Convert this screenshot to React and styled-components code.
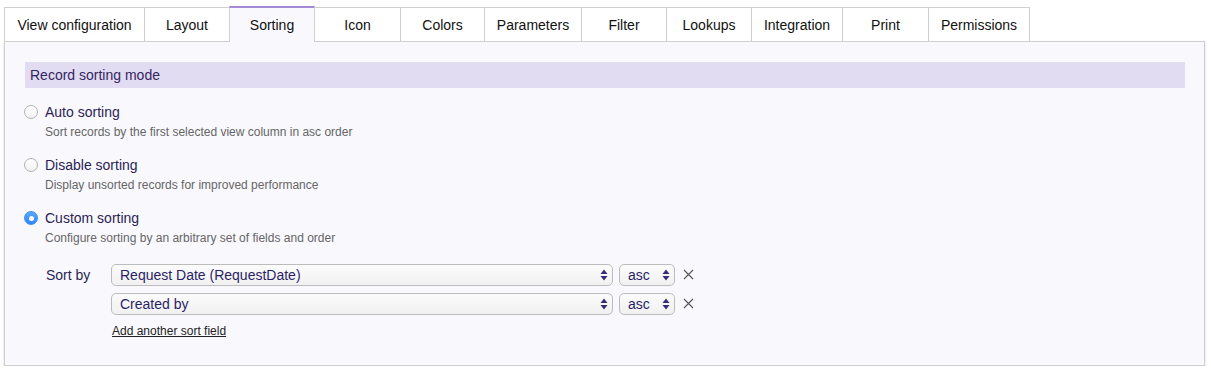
import React from "react";
import styled, { createGlobalStyle } from "styled-components";

const Global = createGlobalStyle`
  html, body { margin: 0; padding: 0; background: #ffffff; }
  body { font-family: "Liberation Sans", Arial, Helvetica, sans-serif; }
  * { box-sizing: border-box; }
`;

const Page = styled.div`
  padding: 7px 6px 0 4px;
  width: 1211px;
`;

const TabBar = styled.div`
  display: flex;
  align-items: flex-end;
  height: 35px;
  position: relative;
  z-index: 1;
`;

const Tab = styled.div`
  width: ${(p) => p.$w}px;
  height: ${(p) => (p.$active ? 36 : 35)}px;
  margin-left: -1px;
  &:first-child { margin-left: 0; }
  padding: 0 10px ${(p) => (p.$active ? 1 : 0)}px;
  display: flex;
  align-items: center;
  justify-content: center;
  font-size: 14px;
  color: #111;
  white-space: nowrap;
  background: ${(p) => (p.$active ? "#f9f8fd" : "#ffffff")};
  border: 1px solid #cfcfcf;
  border-top: ${(p) => (p.$active ? "2px solid #a58bd3" : "1px solid #cfcfcf")};
  border-bottom: ${(p) => (p.$active ? "none" : "1px solid #cfcfcf")};
`;

const Panel = styled.div`
  margin-top: -1px;
  background: #f9f8fd;
  border: 1px solid #cfcfcf;
  box-shadow: 0 1px 2px rgba(0, 0, 0, 0.18);
  padding: 20px 19px 0 20px;
  height: 325px;
`;

const SectionHeader = styled.div`
  height: 26px;
  background: #e2dcf2;
  color: #34265f;
  font-size: 14px;
  display: flex;
  align-items: center;
  padding-left: 5px;
`;

const Options = styled.div`
  display: flex;
  flex-direction: column;
  gap: 14px;
  margin-top: 14px;
`;

const Option = styled.div`
  display: grid;
  grid-template-columns: 20px 1fr;
  align-items: center;
`;

const Radio = styled.span`
  width: 14px;
  height: 14px;
  border-radius: 50%;
  margin-left: -1px;
  display: flex;
  align-items: center;
  justify-content: center;
  border: 1px solid ${(p) => (p.$checked ? "#3b8ff6" : "#b3b3b3")};
  background: ${(p) =>
    p.$checked
      ? "linear-gradient(#5aa8fb, #2f86f5)"
      : "linear-gradient(#ffffff, #f1f1f1)"};
  &::after {
    content: "";
    width: 5px;
    height: 5px;
    border-radius: 50%;
    background: #fff;
    display: ${(p) => (p.$checked ? "block" : "none")};
  }
`;

const OptionLabel = styled.div`
  font-size: 14px;
  line-height: 20px;
  color: #2a1f55;
`;

const OptionDesc = styled.div`
  grid-column: 2;
  font-size: 12px;
  line-height: 17px;
  color: #666;
  margin-top: 2px;
`;

const SortBlock = styled.div`
  display: grid;
  grid-template-columns: 65px auto;
  margin-top: 17px;
  padding-left: 21px;
  row-gap: 7px;
  align-items: center;
`;

const SortLabel = styled.div`
  font-size: 14px;
  color: #2a1f55;
  line-height: 22px;
`;

const SortRow = styled.div`
  grid-column: 2;
  display: flex;
  align-items: center;
  gap: 6px;
`;

const SelectBox = styled.div`
  width: ${(p) => p.$w}px;
  height: 22px;
  border: 1px solid #bcbcbc;
  border-radius: 5px;
  background: linear-gradient(#fbfbfb, #f1f1f1);
  display: flex;
  align-items: center;
  justify-content: space-between;
  padding: 0 4px 0 ${(p) => p.$pl}px;
  font-size: 14px;
  color: #2a1f66;
  white-space: nowrap;
`;

const Remove = styled.span`
  margin-left: 2px;
  margin-top: -2px;
  display: flex;
  align-items: center;
`;

const AddLink = styled.a`
  grid-column: 2;
  font-size: 12px;
  color: #222;
  text-decoration: underline;
  line-height: 16px;
  margin-top: 1px;
  padding-left: 1px;
  cursor: pointer;
`;

const Arrows = () => (
  <svg width="8" height="14" viewBox="0 0 8 14">
    <path d="M4 1.5 L7.5 6 H0.5 Z" fill="#3a2a7a" />
    <path d="M4 12.5 L7.5 8 H0.5 Z" fill="#3a2a7a" />
  </svg>
);

const Cross = () => (
  <svg width="11" height="11" viewBox="0 0 11 11">
    <path d="M1 1 L10 10 M10 1 L1 10" stroke="#555" strokeWidth="1.1" />
  </svg>
);

const tabs = [
  ["View configuration", 141],
  ["Layout", 86],
  ["Sorting", 86],
  ["Icon", 87],
  ["Colors", 85],
  ["Parameters", 98],
  ["Filter", 86],
  ["Lookups", 86],
  ["Integration", 92],
  ["Print", 87],
  ["Permissions", 102],
];

const options = [
  ["Auto sorting", "Sort records by the first selected view column in asc order", false],
  ["Disable sorting", "Display unsorted records for improved performance", false],
  ["Custom sorting", "Configure sorting by an arbitrary set of fields and order", true],
];

const sorts = ["Request Date (RequestDate)", "Created by"];

export default function App() {
  return (
    <>
      <Global />
      <Page>
        <TabBar>
          {tabs.map(([t, w]) => (
            <Tab key={t} $w={w} $active={t === "Sorting"}>
              {t}
            </Tab>
          ))}
        </TabBar>
        <Panel>
          <SectionHeader>Record sorting mode</SectionHeader>
          <Options>
            {options.map(([label, desc, checked]) => (
              <Option key={label}>
                <Radio $checked={checked} />
                <OptionLabel>{label}</OptionLabel>
                <OptionDesc>{desc}</OptionDesc>
              </Option>
            ))}
          </Options>
          <SortBlock>
            <SortLabel>Sort by</SortLabel>
            {sorts.map((s) => (
              <SortRow key={s}>
                <SelectBox $w={502} $pl={8}>
                  <span>{s}</span>
                  <Arrows />
                </SelectBox>
                <SelectBox $w={56} $pl={8}>
                  <span>asc</span>
                  <Arrows />
                </SelectBox>
                <Remove>
                  <Cross />
                </Remove>
              </SortRow>
            ))}
            <AddLink>Add another sort field</AddLink>
          </SortBlock>
        </Panel>
      </Page>
    </>
  );
}
